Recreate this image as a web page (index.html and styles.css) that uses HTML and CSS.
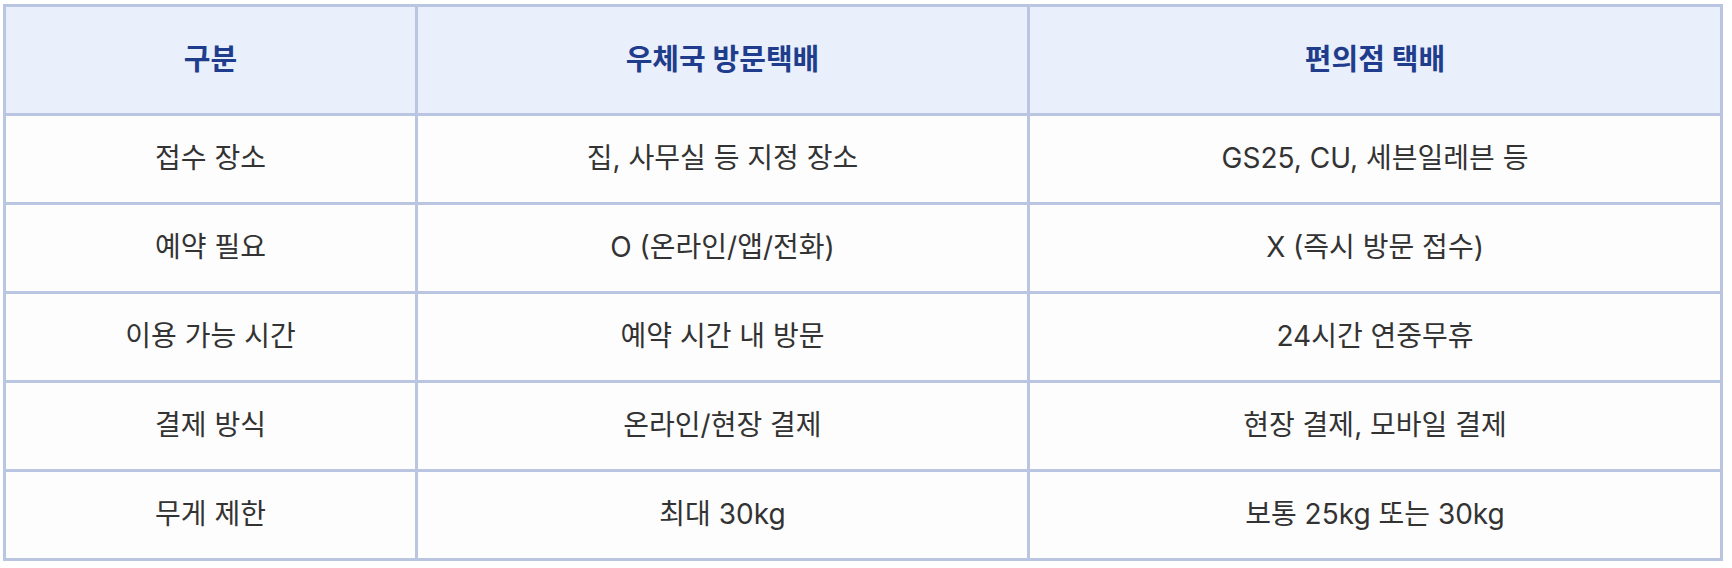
FILE: index.html
```html
<!DOCTYPE html>
<html lang="ko">
<head>
<meta charset="utf-8">
<title>택배 비교</title>
<link rel="stylesheet" href="styles.css">
</head>
<body>
<table class="compare">
  <colgroup>
    <col class="c1">
    <col class="c2">
    <col class="c3">
  </colgroup>
  <thead>
    <tr><th>구분</th><th>우체국 방문택배</th><th>편의점 택배</th></tr>
  </thead>
  <tbody>
    <tr><td>접수 장소</td><td>집, 사무실 등 지정 장소</td><td>GS25, CU, 세븐일레븐 등</td></tr>
    <tr><td>예약 필요</td><td>O (온라인/앱/전화)</td><td>X (즉시 방문 접수)</td></tr>
    <tr><td>이용 가능 시간</td><td>예약 시간 내 방문</td><td>24시간 연중무휴</td></tr>
    <tr><td>결제 방식</td><td>온라인/현장 결제</td><td>현장 결제, 모바일 결제</td></tr>
    <tr><td>무게 제한</td><td>최대 30kg</td><td>보통 25kg 또는 30kg</td></tr>
  </tbody>
</table>
</body>
</html>
```

FILE: styles.css
```css
html, body {
  margin: 0;
  padding: 0;
  background: #ffffff;
}
body {
  font-family: Inter, "Noto Sans CJK KR", sans-serif;
}
.compare {
  margin: 4px 0 0 3px;
  width: 1720px;
  table-layout: fixed;
  border-collapse: separate;
  border-spacing: 0;
  border-top: 3px solid #b9c5e1;
  border-left: 3px solid #b9c5e1;
}
.c1 { width: 412px; }
.c2 { width: 612px; }
.c3 { width: 693px; }
.compare th,
.compare td {
  padding: 0;
  text-align: center;
  vertical-align: middle;
  border-right: 3px solid #b9c5e1;
  border-bottom: 3px solid #b9c5e1;
  line-height: 1.2;
}
.compare th {
  height: 106px;
  background: #e9f0fb;
  color: #1f3d8c;
  font-size: 29px;
  font-weight: 700;
}
.compare td {
  height: 86px;
  background: #fdfdfd;
  color: #333333;
  font-size: 28px;
  font-weight: 400;
}
```
